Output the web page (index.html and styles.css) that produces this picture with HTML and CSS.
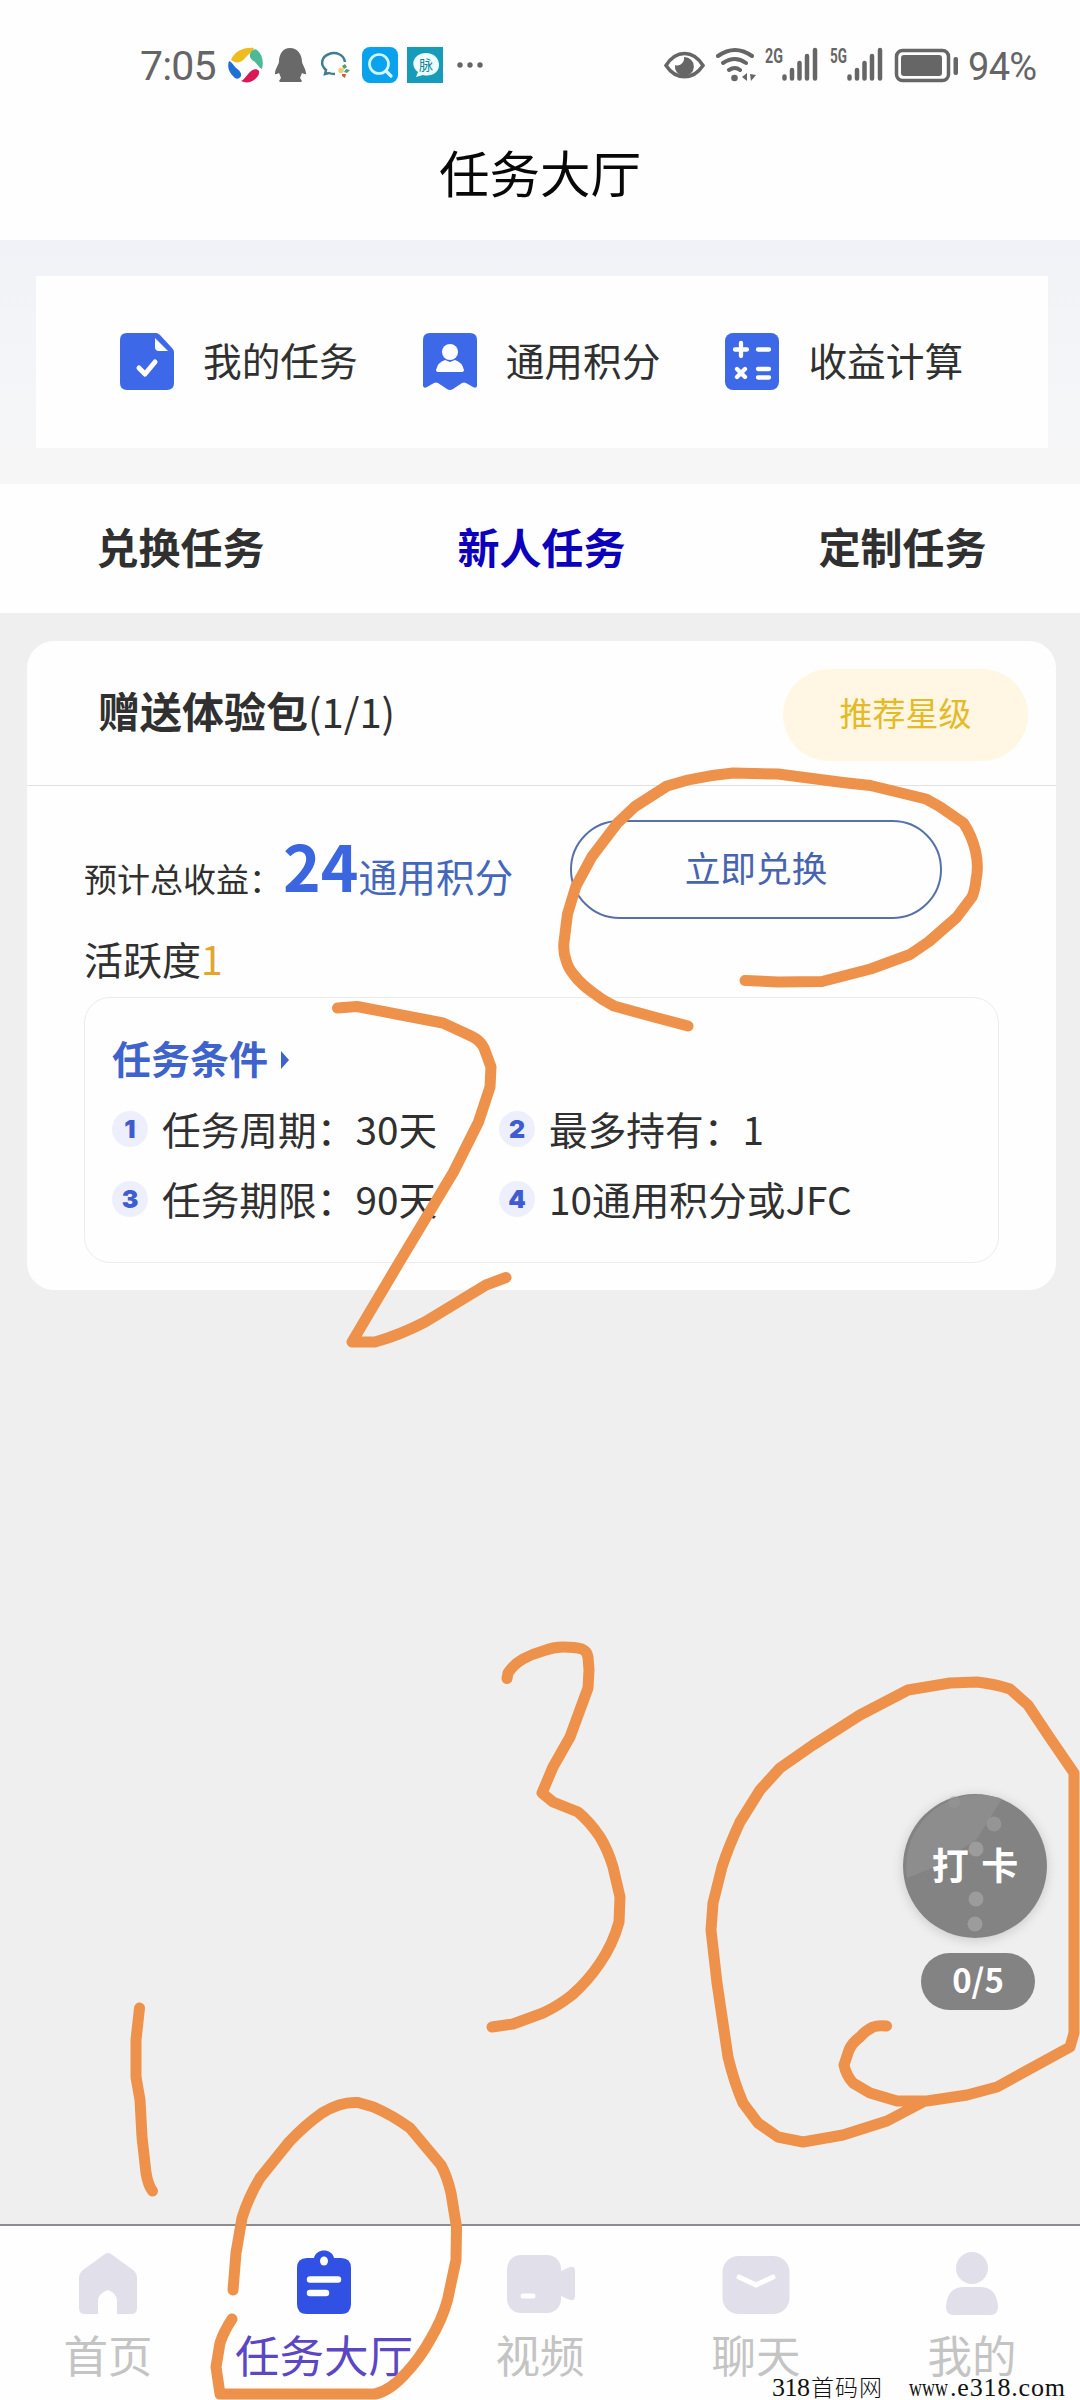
FILE: index.html
```html
<!DOCTYPE html>
<html lang="zh-CN">
<head>
<meta charset="utf-8">
<title>任务大厅</title>
<link rel="stylesheet" href="styles.css">
</head>
<body>
<div class="screen">
  <header class="status">
    <span class="clock">7:05</span>
    <svg class="status-icons" width="270" height="40" viewBox="225 45 270 40">
      <path fill="#edbd20" d="M231 60c3-8 12-13 23-12-1 3-4 5-8 9-4 6-10 7-15 3z"/>
      <path fill="#4cba96" d="M250 54c1-3 4-6 7-4 5 4 7 11 5 19-3-1-4-4-7-7-3-2-6-4-5-8z"/>
      <path fill="#dc1758" d="M241 81c3-1 5-5 8-8 3-4 8-5 10-2 1 3-2 7-5 9-4 3-9 3-13 1z"/>
      <path fill="#1d70d6" d="M229 61c3 1 4 4 7 7 3 2 6 5 5 8-2 4-6 3-8 0-4-4-6-9-4-15z"/>
      <path fill="#696969" d="M290 48c7 0 12 6 12 14 1 4 4 7 4 12-1 1-3-1-4-1l-2 5 2 3-1 1H280l-1-1 2-3-2-5c-1 0-3 2-4 1 0-5 3-8 4-12 0-8 4-14 11-14z"/>
      <path fill="none" stroke="#417d91" stroke-width="2.5" d="M335 74c-3 0-4 0-6-1l-4 1 1-4c-6-5-5-13 3-16 7-3 15 1 16 8"/>
      <path fill="#5f9a62" d="m342 66 3-2 2 3-3 2z"/><path fill="#4e998a" d="m346 69 4 1-3 3-3-1z"/><path fill="#bd6439" d="m342 74 4 0-1 4-3-2z"/><circle cx="341" cy="70.500" r="2.800" fill="#edce73"/>
      <rect x="362" y="47" width="36" height="36" rx="8" fill="#08a2ed"/>
      <circle cx="379" cy="64" r="9.5" fill="none" stroke="#d6f6ff" stroke-width="2.7"/><path d="m386 71 5 5" stroke="#d6f6ff" stroke-width="3.2" stroke-linecap="round"/>
      <rect x="407" y="47" width="36" height="36" fill="#169bb9"/>
      <path fill="#edffff" d="M426 53c8 0 13 5 13 12 0 8-8 12-16 10l-7 2 2-5c-9-7-4-19 8-19z"/>
      <text class="mai" x="419" y="70">脉</text>
      <g fill="#656565"><circle cx="460" cy="65" r="2.7"/><circle cx="470" cy="65" r="2.7"/><circle cx="480" cy="65" r="2.7"/></g>
    </svg>
    <svg class="signals" width="300" height="40" viewBox="660 45 300 40" fill="#666">
      <path d="M666 65.500c10-16 27-16 37 0-10 15-27 15-37 0z" fill="none" stroke="#666" stroke-width="3.500"/>
      <path d="M684 57a9.500 9.500 0 1 1-9 8c4 2 10-2 9-8z"/>
      <g fill="none" stroke="#666" stroke-width="4" stroke-linecap="round"><path d="M718 56q17-12 34 0M723 63q12-8 23 0M729 70q6-4 11 0"/></g>
      <circle cx="734.500" cy="78" r="3.300"/><path d="m742 77 5-4v8zM750 74l6 1-5 6z"/>
      <text class="net" x="765" y="63" textLength="18" lengthAdjust="spacingAndGlyphs">2G</text>
      <text class="net" x="830" y="63" textLength="17" lengthAdjust="spacingAndGlyphs">5G</text>
      <path d="M784.500 78.500v-2M792 78.500V70M799.500 78.500V63M807 78.500V56M815 78.500V50M849.500 78.500v-2M857 78.500V70M864.500 78.500V63M872 78.500V56M880 78.500V50" stroke="#666" stroke-width="4.500" stroke-linecap="round"/>
      <rect x="896.500" y="50.500" width="52" height="30" rx="6" fill="none" stroke="#666" stroke-width="3.500"/>
      <rect x="901" y="55" width="41" height="21" rx="3"/><rect x="953.500" y="57" width="4.500" height="18" rx="2"/>
    </svg>
    <span class="battery">94%</span>
  </header>
  <h1 class="title">任务大厅</h1>

  <section class="band">
    <nav class="shortcuts">
      <a class="shortcut">
        <svg width="54" height="58" viewBox="0 0 54 58"><path fill="#3d68e8" d="M7 0H36q2 0 4 2L52 15q2 2 2 4V50q0 7-7 7H7q-7 0-7-7V7Q0 0 7 0z"/><path fill="#fff" d="M35 5v9q0 4 4 4h9z"/><path d="m19 35 6 6 10-12" fill="none" stroke="#fff" stroke-width="5" stroke-linecap="round" stroke-linejoin="round"/></svg>
        <span>我的任务</span>
      </a>
      <a class="shortcut">
        <svg width="54" height="58" viewBox="0 0 54 58"><path fill="#3d68e8" d="M7 0H47q7 0 7 7V53q-1 3-4 1l-7-4q-2-1-4 0l-9 6q-3 2-6 0l-9-6q-2-1-4 0l-7 4q-3 2-4-1V7Q0 0 7 0z"/><circle cx="27" cy="19" r="8" fill="#fff"/><path fill="#fff" d="M13 37q2-8 9-10l5 2 5-2q7 2 9 10 0 2-3 2H16q-3 0-3-2z"/></svg>
        <span>通用积分</span>
      </a>
      <a class="shortcut">
        <svg width="54" height="58" viewBox="0 0 54 58"><rect width="54" height="57" rx="8" fill="#3d68e8"/><path d="M16 10V23M10 16.500h12M33 16.500H44M33 36H44M33 44.500H44M12 36l8 8M20 36l-8 8" stroke="#fff" stroke-width="4.300" stroke-linecap="round"/></svg>
        <span>收益计算</span>
      </a>
    </nav>
  </section>

  <nav class="tabs">
    <a>兑换任务</a>
    <a class="active">新人任务</a>
    <a>定制任务</a>
  </nav>

  <main class="content">
    <article class="card">
      <header class="card-head">
        <h2>赠送体验包<small>(1/1)</small></h2>
        <span class="badge">推荐星级</span>
      </header>
      <div class="card-body">
        <div class="income">
          <p class="amount">预计总收益：<b>24</b><span>通用积分</span></p>
          <button class="redeem">立即兑换</button>
        </div>
        <p class="activity">活跃度<em>1</em></p>
        <section class="terms">
          <h3>任务条件<i class="arrow"></i></h3>
          <ol>
            <li><b>1</b>任务周期：30天</li>
            <li><b>2</b>最多持有：1</li>
            <li><b>3</b>任务期限：90天</li>
            <li><b>4</b>10通用积分或JFC</li>
          </ol>
        </section>
      </div>
    </article>
  </main>

  <footer class="tabbar">
    <a>
      <svg width="60" height="68" viewBox="0 0 60 68" fill="#e1e0ea"><path d="M27 4q3-2 6 0L55 20q4 3 4 8V58q0 6-6 6H39V50q-1-7-9-10-9 3-10 10V64H7q-6 0-6-6V28q0-5 4-8z"/></svg>
      <span>首页</span>
    </a>
    <a class="current">
      <svg width="60" height="68" viewBox="0 0 60 68"><path fill="#3150e4" d="M13 8h7c2-10 18-10 20 0h7q10 0 10 10V54q0 10-10 10H13Q3 64 3 54V18Q3 8 13 8z"/><ellipse cx="30" cy="11" rx="4" ry="4.500" fill="#fff"/><path d="M16 29.500H44M16 43H32" stroke="#fff" stroke-width="6.500" stroke-linecap="round"/></svg>
      <span>任务大厅</span>
    </a>
    <a>
      <svg width="70" height="68" viewBox="0 0 70 68" fill="#e1e0ea"><rect x="2" y="5" width="54" height="58" rx="14"/><path d="m56 21 9-4q5-1 5 4V46q0 5-5 4l-9-4z"/><path d="M18 46H28" stroke="#fff" stroke-width="5" stroke-linecap="round"/></svg>
      <span>视频</span>
    </a>
    <a>
      <svg width="68" height="68" viewBox="0 0 68 68"><rect x=".5" y="6" width="67" height="58" rx="16" fill="#e1e0ea"/><path d="m17 27 17 8 17-8" fill="none" stroke="#fff" stroke-width="5" stroke-linecap="round" stroke-linejoin="round"/></svg>
      <span>聊天</span>
    </a>
    <a>
      <svg width="60" height="68" viewBox="0 0 60 68" fill="#e1e0ea"><circle cx="30" cy="18" r="16"/><path d="M4 57q1-20 18-20H38q17 0 18 20 0 7-7 8H11q-7-1-7-8z"/></svg>
      <span>我的</span>
    </a>
  </footer>

  <aside class="checkin">
    <div class="disc">
      <svg width="144" height="144" viewBox="0 0 144 144"><circle cx="72" cy="72" r="72" fill="#838383"/><path fill="#8d8d8d" d="M99 5A72 72 0 0 0 4 84L29 74 73 46z"/><g fill="#9c9c9c"><circle cx="73" cy="55" r="7.500"/><circle cx="73" cy="105" r="7.500"/><circle cx="72" cy="130" r="7.500"/><circle cx="91" cy="30" r="7.500" opacity=".7"/><circle cx="51" cy="8" r="6" opacity=".4"/></g></svg>
      <span>打 卡</span>
    </div>
    <div class="count">0/5</div>
  </aside>

  <svg class="ink" width="1080" height="2400" viewBox="0 0 1080 2400">
    <path d="M688 1026 654 1017 614 1006Q602 1000 592 992 581 984 574 975 568 968 566 960 563 952 564 942L567.500 914 576 886 592 856.500 617.500 823 635 806.500 667 786 688 780Q710 775 733 773L778 774 843 782.500 870.500 785.500 926 799 939.500 806.500 963.500 823Q972 836 975.500 851 979 866 976 880 975 890 972 897L956.500 917.500 929 941.500 910 954.500 870.500 969 822 981.500 778 982 745 980.500"/>
    <path d="M337.500 1008 357 1006.500 396 1014 443 1023 471 1036Q480 1040 484 1048L491 1067 490 1087 478.500 1122 453.500 1172 400 1261 352 1342H375Q400 1335 425 1322L486 1285 506 1277.500"/>
    <path d="M507 1678.500 508 1673Q514 1664 523 1659 532 1654 543 1651 553 1647 563 1647 575 1647 582 1649 587 1651 588 1657L589 1670 588 1688 570 1737 553 1767 542 1793 553 1802 578 1812Q590 1822 600 1837 608 1850 613 1867L620 1897 619 1922Q613 1944 600 1963 588 1981 572 1995 558 2006 543 2013L513 2024 492 2027"/>
    <path d="M139.500 2008 136 2040V2077L140 2100 142 2137 146 2173Q148 2185 152.500 2191"/>
    <path d="M233 2290 236 2253 242 2218Q248 2198 260 2178L289 2142Q305 2125 322 2113 330 2108 339 2105 348 2102 358 2102.500L373.500 2107Q392 2115 410 2128L441 2165Q447 2176 451 2193L456.500 2227 456 2260 447.500 2300Q442 2320 430 2340 420 2358 406 2373 390 2391 375 2394H220L216 2367 220 2343Q224 2331 232 2319"/>
    <path d="M886.500 2026Q878 2025 873 2027 865 2031 860 2037 852 2043 849 2050L844 2065Q846 2075 853 2083L870 2093 897 2101H927L967 2095 997 2087 1070 2047 1074 2033V1773L1050 1738 1028 1705 1010 1689Q995 1684 977 1682L950 1683 908 1690 860 1715 813 1745 780 1768 760 1790 740 1822Q728 1848 722 1867L713 1903 711 1930 717 1983 728 2057Q734 2082 743 2103L758 2123 778 2137 803 2142 843 2135 887 2121 925 2101"/>
  </svg>

  <svg class="watermark" width="300" height="30" viewBox="770 2370 300 30">
    <text y="2396" x="772" textLength="38" lengthAdjust="spacing">318</text>
    <text class="site" y="2396" x="811" textLength="71" lengthAdjust="spacing">首码网</text>
    <text y="2396" x="909" textLength="39" lengthAdjust="spacingAndGlyphs">www</text>
    <text y="2396" x="950" textLength="115" lengthAdjust="spacing">.e318.com</text>
  </svg>
</div>
</body>
</html>
```
FILE: styles.css
```css
* { box-sizing: border-box; }
body, h1, h2, h3, p, ol { margin: 0; padding: 0; }
body { background: #efefef; }
svg { display: block; flex: none; }

.screen {
  position: relative;
  width: 1080px;
  height: 2400px;
  overflow: hidden;
  display: flex;
  flex-direction: column;
  background: #efefef;
  color: #303030;
  font-family: "Noto Sans CJK SC", sans-serif;
  font-size: 39px;
  white-space: nowrap;
}

/* status bar */
.status {
  display: flex;
  align-items: center;
  height: 130px;
  padding: 0 0 0 140px;
  background: #fefefe;
  color: #656565;
  font-family: Roboto, sans-serif;
}
.clock { width: 85px; font-size: 41px; letter-spacing: -.8px; line-height: 40px; padding-top: 2px; }
.status-icons { margin-right: 165px; }
.mai { font: 14px "Noto Sans CJK SC", sans-serif; fill: #16869e; }
.net { font: bold 20px Roboto, sans-serif; }
.battery { margin-left: 8px; font-size: 38px; line-height: 40px; padding-top: 4px; letter-spacing: -.7px; }

.title {
  height: 110px;
  background: #fefefe;
  color: #080808;
  font-size: 50.500px;
  font-weight: 400;
  line-height: 82px;
  text-align: center;
}

/* shortcuts */
.band { height: 244px; padding: 36px 32px 36px 36px; background: linear-gradient(#f0f2f7, #f5f6f8 70%, #f6f6f6); }
.shortcuts { display: grid; grid-template-columns: repeat(3, 302.700px); height: 172px; padding-left: 84px; background: #fefefe; }
.shortcut { display: flex; align-items: center; gap: 29px; font-size: 38.700px; line-height: 50px; }
.shortcut span { padding-bottom: 6px; }

/* category tabs */
.tabs { display: grid; grid-template-columns: repeat(3, 361px); height: 129px; background: #fefefe; font-size: 42px; font-weight: 700; line-height: 123px; text-align: center; }
.tabs .active { color: #0c00bd; }

/* task card */
.content { flex: 1; padding: 28px 24px 0 27px; }
.card { height: 649px; border-radius: 27px; background: #fefefe; }
.card-head { display: flex; align-items: center; justify-content: space-between; height: 145px; padding: 0 28px 0 71px; border-bottom: 1px solid #e2e2e2; }
.card-head h2 { font-size: 42px; line-height: 60px; padding-bottom: 5px; }
.card-head small { font-size: 40px; font-weight: 400; }
.badge { width: 245px; height: 92px; margin-top: 4px; border-radius: 46px; background: #fff6e4; color: #e4ba25; font-size: 33px; line-height: 87px; text-align: center; }
.card-body { padding: 34px 57px 0; }
.income { display: flex; justify-content: space-between; height: 99px; }
.amount { display: flex; align-items: baseline; margin-top: -5px; font-size: 33px; line-height: 98px; color: #303030; }
.amount b { margin-left: 1px; color: #3c65e0; font-size: 64px; }
.amount span { color: #4467bb; font-size: 38.700px; }
.redeem { width: 372px; height: 99px; margin-right: 57px; padding: 0 0 5px; border: 2px solid #5870aa; border-radius: 50px; background: none; color: #4664af; font: 35.700px/50px "Noto Sans CJK SC", sans-serif; }
.activity { height: 78px; font-size: 39px; line-height: 78px; }
.activity em { color: #e2a62d; font-style: normal; }
.terms { width: 915px; height: 266px; padding: 31px 28px 0 27px; border: 1px solid #ececec; border-radius: 26px; }
.terms h3 { display: flex; align-items: center; color: #3e63cc; font-size: 39px; line-height: 56px; }
.arrow { margin: 5px 0 0 13px; border: 9px solid transparent; border-left: 8px solid #3e63cc; border-right: 0; }
.terms ol { display: grid; grid-template-columns: 387px 1fr; grid-auto-rows: 70px; margin-top: 8px; list-style: none; }
.terms li { display: flex; align-items: center; font-size: 38.700px; }
.terms li b { width: 36px; height: 36px; margin: 2px 14px 0 0; border-radius: 50%; background: #edf0fc; color: #3f5cd0; font: 900 25px/36px Inter, sans-serif; text-align: center; }

/* bottom bar */
.tabbar { display: grid; grid-template-columns: repeat(5, 1fr); height: 176px; border-top: 2px solid #8d8d91; background: #fefefe; color: #c4c4c4; font-size: 44.500px; }
.tabbar a { display: flex; flex-direction: column; align-items: center; padding-top: 24px; }
.tabbar span { margin-top: 6px; line-height: 60px; }
.tabbar .current { color: #5b46c4; }

/* floating check-in button */
.checkin { position: absolute; left: 903px; top: 1794px; width: 144px; color: #fff; font-weight: 700; text-align: center; }
.disc { position: relative; height: 144px; border-radius: 50%; box-shadow: 0 2px 12px rgba(0,0,0,.16); }
.disc span { position: absolute; inset: 0; font-size: 37px; line-height: 141px; word-spacing: 4px; }
.count { width: 114px; height: 57px; margin: 15px 0 0 18px; border-radius: 29px; background: #838383; font-size: 33px; line-height: 53px; }

/* pen marks over the page */
.ink { position: absolute; inset: 0; fill: none; stroke: #ee914a; stroke-width: 11; stroke-linecap: round; stroke-linejoin: round; }
.watermark { position: absolute; left: 770px; top: 2370px; font: 26px "Liberation Serif", serif; fill: #111; }
.site { font: 300 23px "Noto Sans CJK SC", sans-serif; }
```
